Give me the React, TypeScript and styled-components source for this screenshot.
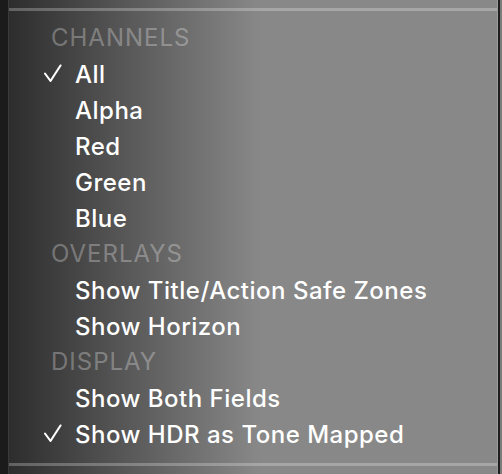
import styled, { createGlobalStyle } from "styled-components";

const GlobalStyle = createGlobalStyle`
  html, body {
    margin: 0;
    padding: 0;
    background: #1b1b1b;
  }
  body {
    width: 502px;
    height: 474px;
    overflow: hidden;
    font-family: Inter, "Liberation Sans", Arial, sans-serif;
  }
`;

const Frame = styled.div`
  display: flex;
  height: 474px;
  width: 502px;
`;

const LeftStrip = styled.div`
  width: 8px;
  background: #1b1b1b;
`;

const Panel = styled.div`
  flex: 1;
  padding-top: 8px;
  background: linear-gradient(to right, #2d2d2d 0px, #888888 250px, #888888 100%);
  border-left: 1px solid #3a3a3a;
  border-right: 1px solid #9a9a9a;
`;

const RightEdge = styled.div`
  width: 4px;
  display: flex;
  &:before {
    content: "";
    width: 2px;
    background: #1e1e1e;
  }
  &:after {
    content: "";
    width: 2px;
    background: #7c7c7c;
  }
`;

const Menu = styled.div`
  border-top: 3px solid rgba(255, 255, 255, 0.25);
  border-bottom: 3px solid rgba(255, 255, 255, 0.25);
  padding: 9px 0 11px;
  display: flex;
  flex-direction: column;
`;

const Header = styled.div`
  height: 36px;
  line-height: 36px;
  padding-left: 42px;
  font-size: 24px;
  font-weight: 400;
  letter-spacing: 1px;
  color: rgba(255, 255, 255, 0.3);
`;

const Item = styled.div`
  height: 36px;
  display: flex;
  align-items: center;
  padding-left: 35px;
  font-size: 24px;
  font-weight: 500;
  letter-spacing: 0.5px;
  color: #ffffff;
`;

const CheckSlot = styled.span`
  width: 31px;
  height: 36px;
  display: flex;
  align-items: center;
`;

const Check = () => (
  <svg width="20" height="20" viewBox="0 0 20 20">
    <polyline
      points="1,9.5 6.5,17 16.5,1.5"
      fill="none"
      stroke="#ffffff"
      strokeWidth="2.1"
      strokeLinecap="round"
      strokeLinejoin="round"
    />
  </svg>
);

type Entry = { label: string; header?: boolean; checked?: boolean };

const entries: Entry[] = [
  { label: "CHANNELS", header: true },
  { label: "All", checked: true },
  { label: "Alpha" },
  { label: "Red" },
  { label: "Green" },
  { label: "Blue" },
  { label: "OVERLAYS", header: true },
  { label: "Show Title/Action Safe Zones" },
  { label: "Show Horizon" },
  { label: "DISPLAY", header: true },
  { label: "Show Both Fields" },
  { label: "Show HDR as Tone Mapped", checked: true },
];

const App = () => {
  return (
    <>
      <GlobalStyle />
      <Frame>
        <LeftStrip />
        <Panel>
          <Menu>
            {entries.map((e) =>
              e.header ? (
                <Header key={e.label}>{e.label}</Header>
              ) : (
                <Item key={e.label}>
                  <CheckSlot>{e.checked && <Check />}</CheckSlot>
                  {e.label}
                </Item>
              )
            )}
          </Menu>
        </Panel>
        <RightEdge />
      </Frame>
    </>
  );
};

export default App;
